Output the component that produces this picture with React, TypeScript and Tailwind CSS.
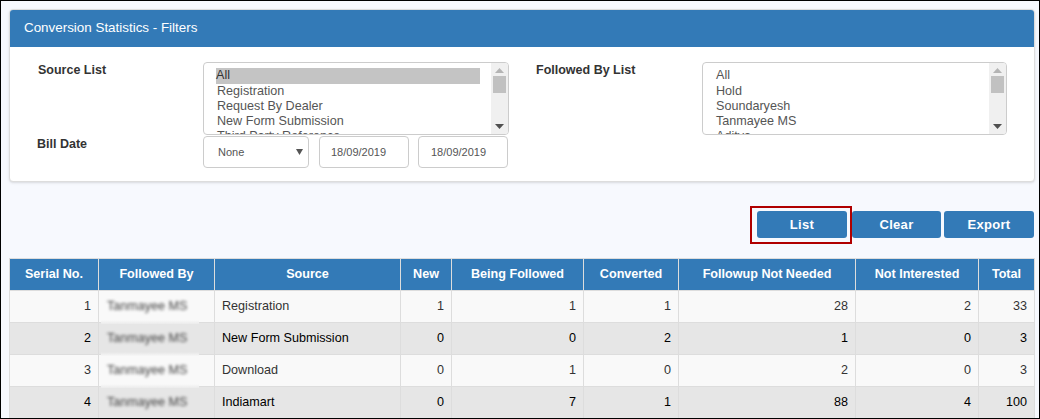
import React from 'react';

const sourceItems = ['All', 'Registration', 'Request By Dealer', 'New Form Submission', 'Third Party Reference'];
const followedItems = ['All', 'Hold', 'Soundaryesh', 'Tanmayee MS', 'Aditya'];

const columns = [
    { label: 'Serial No.', width: 'w-[89px]' },
    { label: 'Followed By', width: 'w-[116px]' },
    { label: 'Source', width: 'w-[186px]' },
    { label: 'New', width: 'w-[51px]' },
    { label: 'Being Followed', width: 'w-[132px]' },
    { label: 'Converted', width: 'w-[95px]' },
    { label: 'Followup Not Needed', width: 'w-[177px]' },
    { label: 'Not Interested', width: 'w-[123px]' },
    { label: 'Total', width: 'w-[56px]' },
];

const rows = [
    { serial: 1, source: 'Registration', counts: [1, 1, 1, 28, 2, 33] },
    { serial: 2, source: 'New Form Submission', counts: [0, 0, 2, 1, 0, 3] },
    { serial: 3, source: 'Download', counts: [0, 1, 0, 2, 0, 3] },
    { serial: 4, source: 'Indiamart', counts: [0, 7, 1, 88, 4, 100] },
];

const ListBox = ({ items, selected }: { items: string[]; selected?: boolean }) => (
    <div className="flex h-[73px] overflow-hidden rounded border border-[#ccc] bg-white">
        <div className="flex-1 overflow-hidden pt-[5px] pl-[12px] pr-[11px] text-[12.6px] leading-[15px] text-[#555]">
            {items.map((item, i) => (
                <div
                    key={item}
                    className={i === 0 && selected ? 'h-[16px] bg-[#c4c4c4] text-[#333]' : i === 0 ? 'h-[16px] pl-px' : 'h-[15px] pl-px'}
                >
                    {item}
                </div>
            ))}
        </div>
        <div className="flex w-[17px] flex-col items-center justify-between bg-[#f0f0f0] py-[5px]">
            <svg width="9" height="5" viewBox="0 0 9 5"><path d="M4.5 0 9 5H0z" fill="#b4b4b4" /></svg>
            <div className="mb-auto mt-[3px] h-[17px] w-[13px] bg-[#c1c1c1]" />
            <svg width="9" height="5" viewBox="0 0 9 5"><path d="M4.5 5 9 0H0z" fill="#505050" /></svg>
        </div>
    </div>
);

const Field = ({ children, width }: { children: React.ReactNode; width: string }) => (
    <div className={`flex h-[32px] items-center rounded border border-[#ccc] bg-white text-[11px] text-[#555] ${width}`}>
        {children}
    </div>
);

const App = () => {
    return (
        <div className="h-[419px] w-[1040px] overflow-hidden border border-black bg-[#f7f9fe] pl-[8px] pr-[4px] pt-[8px] font-['Liberation_Sans',Arial,sans-serif] text-[#333]">
            <section className="h-[173px] overflow-hidden rounded border border-[#ddd] bg-white shadow-sm">
                <h1 className="flex h-[37px] items-center bg-[#337ab7] pl-[14px] text-[13.4px] font-normal text-white">
                    Conversion Statistics - Filters
                </h1>
                <div className="flex pt-[15px]">
                    <div className="ml-[28px] w-[165px]">
                        <p className="text-[12.5px] font-bold leading-[16px]">Source List</p>
                        <p className="-ml-px mt-[58px] text-[12.5px] font-bold leading-[16px]">Bill Date</p>
                    </div>
                    <div className="w-[306px]">
                        <ListBox items={sourceItems} selected />
                        <div className="mt-px flex">
                            <Field width="w-[106px] justify-between pl-[14px] pr-[5px]">
                                <span>None</span>
                                <svg width="7" height="6" viewBox="0 0 7 6"><path d="M0 0h7L3.5 6z" fill="#555" /></svg>
                            </Field>
                            <Field width="ml-[10px] w-[90px] pl-[11px]">18/09/2019</Field>
                            <Field width="ml-[9px] w-[90px] pl-[12px]">18/09/2019</Field>
                        </div>
                    </div>
                    <div className="ml-[27px] w-[166px]">
                        <p className="text-[12.5px] font-bold leading-[16px]">Followed By List</p>
                    </div>
                    <div className="w-[305px]">
                        <ListBox items={followedItems} />
                    </div>
                </div>
            </section>

            <div className="mt-[24px] flex justify-end pr-px text-[13px] font-bold text-white">
                <div className="h-[38px] border-2 border-[#b00000] pb-[4px] pl-[5px] pr-[3px] pt-[3px]">
                    <button className="block h-[27px] w-[90px] rounded-[3px] bg-[#337ab7] tracking-[0.3px]">List</button>
                </div>
                <button className="mt-[5px] h-[27px] w-[89px] rounded-[3px] bg-[#337ab7] tracking-[0.3px]">Clear</button>
                <button className="ml-[3px] mt-[5px] h-[27px] w-[90px] rounded-[3px] bg-[#337ab7] tracking-[0.3px]">Export</button>
            </div>

            <table className="mt-[14px] w-[1026px] table-fixed border-collapse text-[12.6px]">
                <thead>
                    <tr className="h-[32px] bg-[#337ab7] text-white">
                        {columns.map((col) => (
                            <th key={col.label} className={`border border-[#ddd] text-center font-bold ${col.width}`}>
                                {col.label}
                            </th>
                        ))}
                    </tr>
                </thead>
                <tbody>
                    {rows.map((row, i) => (
                        <tr key={row.serial} className={`h-[32px] ${i % 2 === 0 ? 'bg-[#f9f9f9]' : 'bg-[#e6e6e6] text-black'}`}>
                            <td className="border border-[#ddd] pr-[7px] text-right">{row.serial}</td>
                            <td className="relative border border-[#ddd] pl-[8px]">
                                <span className="block text-[#444] blur-[1.4px]">Tanmayee MS</span>
                                {/* the redaction smeared the row line under the name */}
                                {i < 3 && (
                                    <span
                                        className={`absolute -bottom-[2px] left-[2px] h-[4px] w-[98px] bg-gradient-to-b ${
                                            i % 2 === 0 ? 'from-[#f9f9f9] to-[#ebebeb]' : 'from-[#e6e6e6] to-[#f7f7f7]'
                                        }`}
                                    />
                                )}
                            </td>
                            <td className="border border-[#ddd] pl-[7px]">{row.source}</td>
                            {row.counts.map((count, j) => (
                                <td key={j} className="border border-[#ddd] pr-[7px] text-right">{count}</td>
                            ))}
                        </tr>
                    ))}
                </tbody>
            </table>
        </div>
    );
};

export default App;
